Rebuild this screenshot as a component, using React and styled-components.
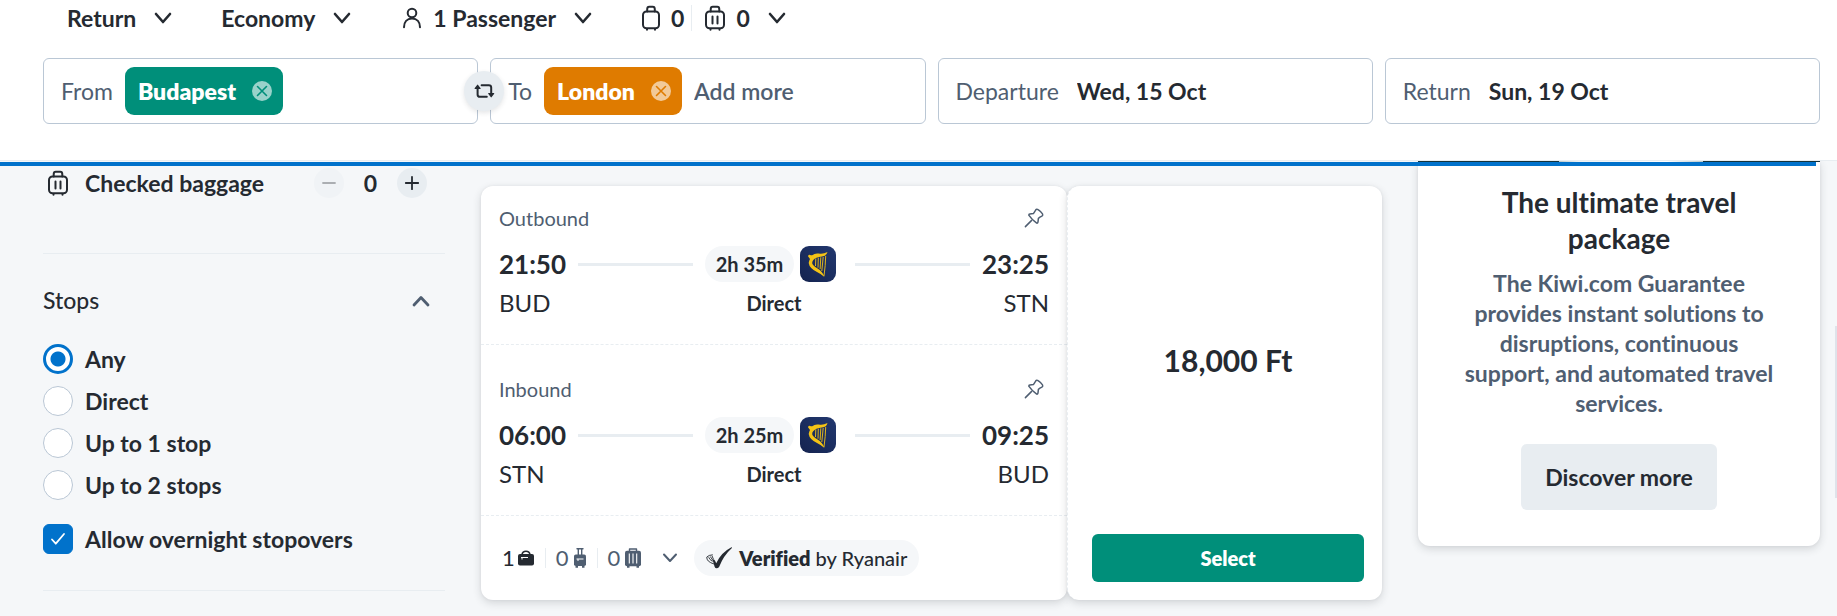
import React, { useState } from "react";
import styled, { createGlobalStyle, css } from "styled-components";

const color = {
  ink: "#252a31",
  slate: "#4f5e71",
  cloud: "#f5f7f9",
  line: "#e8edf1",
  border: "#bac7d5",
  blue: "#0172cb",
  green: "#008f7a",
  orange: "#df7b00",
};

const GlobalStyle = createGlobalStyle`
  *, *::before, *::after { box-sizing: border-box; }
  body { margin: 0; background: ${color.cloud}; font-variant-ligatures: none; }
  body, button, input {
    font-family: Lato, "Open Sans", "Liberation Sans", sans-serif;
    font-size: 23px;
    font-weight: 700;
    line-height: 30px;
    color: ${color.ink};
  }
  button { border: 0; padding: 0; background: none; cursor: pointer; }
  h2, h3, p { margin: 0; }
`;

/* Icons */

const Icon = styled.svg`
  display: block;
  flex: none;
  overflow: visible;
`;

const stroke = {
  fill: "none",
  stroke: "currentColor",
  strokeLinecap: "round",
  strokeLinejoin: "round",
};

const chevrons = {
  down: { d: "M5 8l7 8 7-8", width: 2.6 },
  up: { d: "M5 17l7-7.500 7 7.500", width: 2.8 },
  thin: { d: "M6 8.500l6 6.500 6-6.500", width: 2 },
};

const Chevron = ({ kind = "down" }) => (
  <Icon width="24" height="24" viewBox="0 0 24 24" aria-hidden="true">
    <path d={chevrons[kind].d} {...stroke} strokeWidth={chevrons[kind].width} />
  </Icon>
);

const PersonIcon = () => (
  <Icon width="24" height="24" viewBox="0 0 24 24" aria-hidden="true">
    <g {...stroke} strokeWidth="2">
      <circle cx="12" cy="7" r="4.3" />
      <path d="M4 21.300c0-5.300 3-8.800 8-8.800s8 3.500 8 8.800" />
    </g>
  </Icon>
);

const CabinBagIcon = () => (
  <Icon width="20" height="26" viewBox="0 0 20 26" aria-hidden="true">
    <g {...stroke} strokeWidth="2">
      <rect x="2" y="6.500" width="16" height="16.800" rx="3.500" />
      <path d="M6.200 6.500V4.200Q6.200 1.800 8.300 1.800h3.400q2.100 0 2.100 2.400v2.300M6 24.300v.4M14 24.300v.4" />
    </g>
  </Icon>
);

const CheckedBagIcon = () => (
  <Icon width="22" height="26" viewBox="0 0 22 26" aria-hidden="true">
    <g {...stroke} strokeWidth="2">
      <rect x="2" y="6.500" width="18" height="16.800" rx="3.500" />
      <path d="M6.700 6.500V4.200Q6.700 1.800 8.800 1.800h4.400q2.100 0 2.100 2.400v2.300M6.500 24.300v.4M15.500 24.300v.4M8.500 11.500v7M13.500 11.500v7" />
    </g>
  </Icon>
);

const SwapIcon = () => (
  <Icon width="20" height="14" viewBox="0 0 20 14" aria-hidden="true">
    <path d="M7.600 1.200h7.200Q17.200 1.200 17.200 3.600V9M12.800 12.800H6Q3.600 12.800 3.600 10.400V5" {...stroke} strokeWidth="2" />
    <path d="M3.100 .9q.5-.6 1 0l2.500 3.300q.4.800-.5.800h-5q-.9 0-.5-.8zM17.700 13.100q-.5.600-1 0l-2.500-3.300q-.4-.8.500-.8h5q.9 0 .5.8z" fill="currentColor" />
  </Icon>
);

const CrossIcon = () => (
  <Icon width="20" height="20" viewBox="0 0 20 20" aria-hidden="true">
    <circle cx="10" cy="10" r="10" fill="#fff" opacity=".6" />
    <path d="M5.500 5.500l9 9M14.500 5.500l-9 9" {...stroke} strokeWidth="1.600" />
  </Icon>
);

const SignIcon = ({ plus }) => (
  <Icon width="14" height="14" viewBox="0 0 14 14" aria-hidden="true">
    <path d={plus ? "M.8 7h12.400M7 .8v12.400" : "M1 7h12"} {...stroke} strokeWidth="1.800" />
  </Icon>
);

const PinIcon = () => (
  <Icon width="20" height="20" viewBox="0 0 20 20" aria-hidden="true">
    <g {...stroke} strokeWidth="1.500">
      <path d="M1.400 18.600l6-6" />
      <path d="M4.800 7.200q0-.9 1-1.100l3.600-.5q1.200-1.600 2.300-3.600 1-1.400 2.400-.3 2.600 1.800 4.400 4.200.8 1.200-.6 2.300-2.200 1.100-3.500 2.100l-.4 3.600q-.2 1.400-1.300 1.200Q8 12 4.800 7.200z" />
    </g>
  </Icon>
);

const HarpLogo = () => (
  <Icon width="36" height="36" viewBox="0 0 36 36" role="img" aria-label="Ryanair">
    <defs>
      <linearGradient id="navy" x1="0" y1="1" x2="1" y2="0">
        <stop offset="0" stopColor="#14234f" />
        <stop offset="1" stopColor="#22386f" />
      </linearGradient>
    </defs>
    <rect width="36" height="36" rx="9" fill="url(#navy)" />
    <path
      d="M8 10.300q.6-2 2.200-1.300 1 .4 2 .2Q15 6.800 19 7.600q4 .8 8.500-1.600-.8 4-5.500 4.600-3.300.2-5.500 1.200Q12 14 12.200 17.200q1 3 5.400 5.300 4.700 2.500 6.900 8.500-3.400-3-7.500-5-7.600-3.700-8.300-9 .4-2.600 1.300-4z"
      fill="#f4c315"
    />
    <path
      d="M15.800 12.500l-.3 7.500M18.300 11.700l-.3 10M20.800 11.300l-.7 11.700M23.200 11l-1.400 14M25.700 10q-.2 9-1.700 20"
      fill="none"
      stroke="#f4c315"
      strokeWidth=".9"
    />
  </Icon>
);

const VerifiedIcon = () => (
  <Icon width="26" height="22" viewBox="0 0 26 22" aria-hidden="true">
    <path d="M6.500 12.300q2-.3 2.700 1.700l1 2.200Q15 5.500 25 .4q1.700-.4.700.8-8.200 7.300-12.500 18.600-.7 1.600-2.600 1.400-1.400 0-2-1.500z" fill={color.ink} />
    <g fill="none" stroke={color.ink} strokeWidth=".900">
      <path d="M.8 10q2-2 6-2.200M.8 10q-.5 4.600 7.200 7M2.700 10.200q.6 2.300 3.800 4.200M4.300 9.500l2.700 4.200M6 8.800l1.400 3.300" />
    </g>
  </Icon>
);

const PersonalItemGlyph = () => (
  <Icon width="16" height="16" viewBox="0 0 16 16" aria-hidden="true">
    <path d="M4 4.500Q4.500 1.200 8 1.200t4 3.300" {...stroke} strokeWidth="1.600" />
    <rect y="4" width="16" height="11.500" rx="2" fill="currentColor" />
    <path d="M3 7.500h7M4 7.500v2" fill="none" stroke="#fff" strokeWidth="1" />
  </Icon>
);

const CabinGlyph = () => (
  <Icon width="12" height="20" viewBox="0 0 12 20" aria-hidden="true">
    <path d="M3 .8h6M4.300 1v6M7.700 1v6" {...stroke} strokeWidth="1.400" />
    <rect y="6.500" width="12" height="11.500" rx="1.800" fill="currentColor" />
    <path d="M1.500 18h2.500v1.700H1.500zM8 18h2.500v1.700H8z" fill="currentColor" />
    <path d="M2.500 11h7M4 11v2" fill="none" stroke="#fff" strokeWidth="1" />
  </Icon>
);

const CheckedGlyph = () => (
  <Icon width="16" height="20" viewBox="0 0 16 20" aria-hidden="true">
    <path d="M4.500 3V1h7v2" {...stroke} strokeWidth="1.400" />
    <rect y="2.800" width="16" height="15.400" rx="2" fill="currentColor" />
    <path d="M2 18h2.500v1.700H2zM11.500 18H14v1.700h-2.500z" fill="currentColor" />
    <path d="M4.300 5.500v10M8 5.500v10M11.700 5.500v10" stroke="#fff" strokeWidth="1.100" />
  </Icon>
);

/* Header */

const Page = styled.div`
  position: relative;
  min-height: 100vh;
  overflow: hidden;
`;

const Header = styled.header`
  position: relative;
  z-index: 1;
  background: #fff;
  border-bottom: 1px solid ${color.line};
  padding: 3px 17px 36px 43px;
`;

const LoadingBar = styled.div`
  position: absolute;
  left: 0;
  right: 21px;
  bottom: -6px;
  height: 4px;
  background: ${color.blue};
`;

const Options = styled.div`
  display: flex;
  align-items: center;
  gap: 46px;
  padding-left: 24px;
  margin-bottom: 25px;
`;

const OptionButton = styled.button`
  display: flex;
  align-items: center;
  gap: 15px;
`;

const OptionText = styled.span`
  display: flex;
  align-items: center;
  gap: 9px;
`;

const BagCount = styled.span`
  display: flex;
  align-items: center;
  gap: 10px;
  & + & {
    border-left: 1px solid ${color.line};
    padding-left: 12px;
    margin-left: -8px;
    line-height: 20px;
  }
`;

const SearchForm = styled.form`
  display: grid;
  grid-template-columns: repeat(4, 1fr);
  gap: 12px;
`;

const Field = styled.div`
  position: relative;
  display: flex;
  align-items: center;
  gap: ${(p) => (p.$wide ? 18 : 12)}px;
  height: 66px;
  padding: 0 17px;
  border: 1px solid ${color.border};
  border-radius: 6px;
  background: #fff;
`;

const FieldLabel = styled.label`
  color: ${color.slate};
  font-weight: 400;
`;

const FieldInput = styled.input`
  flex: 1;
  min-width: 0;
  width: 0;
  padding: 0;
  border: 0;
  outline: 0;
  background: none;
  &::placeholder {
    color: ${color.slate};
    opacity: 1;
    font-weight: 600;
  }
`;

const PlaceTag = styled.span`
  display: flex;
  align-items: center;
  gap: 16px;
  height: 48px;
  padding: 0 11px 0 13px;
  border-radius: 9px;
  background: ${(p) => p.$tone};
  color: #fff;
  font-weight: 800;
  button { color: ${(p) => p.$tone}; }
`;

const SwapButton = styled.button`
  position: absolute;
  z-index: 1;
  right: -27px;
  top: 12px;
  display: grid;
  place-items: center;
  width: 40px;
  height: 40px;
  border-radius: 50%;
  background: ${color.line};
  box-shadow: 0 2px 5px rgba(37, 42, 49, 0.12);
`;

/* Page columns */

const Columns = styled.main`
  display: grid;
  grid-template-columns: 402px minmax(0, 1fr) 402px;
  align-items: start;
  gap: 36px;
  padding: 0 17px 0 43px;
`;

const FilterGroup = styled.section`
  border-bottom: 1px solid ${color.line};
  padding: ${(p) => p.$padding};
`;

const BaggageRow = styled.div`
  display: flex;
  align-items: center;
  gap: 20px;
  padding: 0 18px 0 4px;
`;

const FilterName = styled.span`
  flex: 1;
  display: flex;
  align-items: center;
  gap: 16px;
`;

const RoundButton = styled.button`
  display: grid;
  place-items: center;
  width: 30px;
  height: 30px;
  border-radius: 50%;
  background: ${color.line};
  &:disabled {
    opacity: 0.35;
    color: ${color.ink};
  }
`;

const GroupToggle = styled.button`
  display: flex;
  justify-content: space-between;
  align-items: center;
  width: 100%;
  padding-right: 12px;
  margin-bottom: 29px;
  font-weight: 500;
  svg { color: ${color.slate}; }
`;

const ChoiceList = styled.div`
  display: flex;
  flex-direction: column;
  gap: 12px;
  margin-bottom: 24px;
`;

const Choice = styled.label`
  display: flex;
  align-items: center;
  gap: 12px;
`;

const choiceBox = css`
  appearance: none;
  flex: none;
  width: 30px;
  height: 30px;
  margin: 0;
  background: #fff;
`;

const Radio = styled.input`
  ${choiceBox}
  border: 1px solid ${color.border};
  border-radius: 50%;
  &:checked {
    border: 3px solid ${color.blue};
    background: radial-gradient(circle, ${color.blue} 7px, #fff 8px);
  }
`;

const CheckWrap = styled.span`
  display: grid;
  > * { grid-area: 1 / 1; place-self: center; }
  svg { color: #fff; pointer-events: none; }
`;

const Checkbox = styled.input`
  ${choiceBox}
  border: 1px solid ${color.border};
  border-radius: 6px;
  &:checked {
    border-color: ${color.blue};
    background: ${color.blue};
  }
`;

/* Result card */

const raised = css`
  background: #fff;
  box-shadow: 0 3px 9px rgba(37, 42, 49, 0.16), 0 0 3px rgba(37, 42, 49, 0.06);
`;

const Result = styled.article`
  display: grid;
  grid-template-columns: 586fr 315fr;
  margin-top: 25px;
`;

const Trip = styled.div`
  ${raised}
  border-radius: 12px;
`;

const Leg = styled.section`
  padding: 17px 18px 26px;
  border-bottom: 1px dashed ${color.line};
  & + & { padding-top: 29px; }
`;

const LegHead = styled.div`
  display: flex;
  justify-content: space-between;
  align-items: center;
  padding-right: 5px;
  margin-bottom: 13px;
`;

const LegTitle = styled.h3`
  font-size: 20px;
  font-weight: 400;
  color: ${color.slate};
`;

const PinButton = styled.button`
  color: ${color.slate};
`;

const Timeline = styled.div`
  display: flex;
  align-items: center;
  gap: 12px;
  margin-bottom: 6px;
`;

const Time = styled.time`
  font-size: 26px;
`;

const Track = styled.span`
  flex: 1;
  height: 3px;
  background: ${color.line};
`;

const Carrier = styled.span`
  display: flex;
  gap: 6px;
  padding-right: 7px;
`;

const Pill = styled.span`
  display: flex;
  align-items: center;
  gap: 7px;
  height: 36px;
  padding: 0 ${(p) => (p.$light ? 12 : 11)}px;
  border-radius: 18px;
  background: ${color.cloud};
  font-size: 20px;
  font-weight: ${(p) => (p.$light ? 500 : 700)};
  white-space: pre;
  strong { font-weight: 800; }
`;

const Stations = styled.div`
  display: grid;
  grid-template-columns: 1fr auto 1fr;
  font-size: 24px;
  font-weight: 400;
`;

const StopInfo = styled.span`
  font-size: 20px;
  font-weight: 700;
`;

const ArrivalCode = styled.span`
  text-align: right;
`;

const TripFooter = styled.div`
  display: flex;
  align-items: center;
  padding: 24px 18px;
`;

const Allowance = styled.button`
  display: flex;
  align-items: center;
  padding: 0 12px 0 3px;
  font-size: 22px;
  font-weight: 400;
  line-height: 18px;
  color: ${color.slate};
  > svg { margin-left: 6px; }
`;

const AllowanceItem = styled.span`
  display: flex;
  align-items: center;
  gap: 5px;
  padding-right: 11px;
  ${(p) => p.$included && css`gap: 3px; color: ${color.ink};`}
  & + & {
    border-left: 1px solid ${color.line};
    padding-left: 10px;
  }
`;

const PricePanel = styled.div`
  ${raised}
  display: flex;
  flex-direction: column;
  border-left: 1px dashed ${color.line};
  border-radius: 12px;
  padding: 0 18px 18px 24px;
`;

const Price = styled.p`
  flex: 1;
  display: grid;
  place-items: center;
  font-size: 30px;
`;

const SelectButton = styled.button`
  height: 48px;
  border-radius: 6px;
  background: ${color.green};
  color: #fff;
  font-size: 20px;
  font-weight: 800;
`;

/* Promotion */

const Promo = styled.aside`
  ${raised}
  border-radius: 0 0 12px 12px;
  padding-bottom: 36px;
  text-align: center;
`;

const PromoPhoto = styled.div`
  height: 1px;
  margin-bottom: 22px;
  background: linear-gradient(90deg, #15343c 35%, #b9c7c9 35%, #eef2f3 40%, #fff 62%, #b9c7c9 71%, #15343c 71%);
`;

const PromoTitle = styled.h2`
  padding: 0 64px;
  font-size: 28px;
  line-height: 36px;
  margin-bottom: 12px;
`;

const PromoText = styled.p`
  padding: 0 40px;
  margin-bottom: 26px;
  color: ${color.slate};
`;

const PromoButton = styled.button`
  height: 66px;
  padding: 0 24px;
  border-radius: 6px;
  background: ${color.line};
`;

const ScrollThumb = styled.div`
  position: absolute;
  right: 0;
  top: 326px;
  width: 2px;
  height: 172px;
  background: #dfe3ea;
`;

const legs = [
  { title: "Outbound", from: "BUD", to: "STN", departs: "21:50", arrives: "23:25", duration: "2h 35m" },
  { title: "Inbound", from: "STN", to: "BUD", departs: "06:00", arrives: "09:25", duration: "2h 25m" },
];

const stops = ["Any", "Direct", "Up to 1 stop", "Up to 2 stops"];

function SearchHeader() {
  return (
    <Header>
      <Options>
        <OptionButton type="button">Return<Chevron /></OptionButton>
        <OptionButton type="button">Economy<Chevron /></OptionButton>
        <OptionButton type="button">
          <OptionText><PersonIcon />1 Passenger</OptionText>
          <Chevron />
        </OptionButton>
        <OptionButton type="button" aria-label="Baggage">
          <BagCount><CabinBagIcon />0</BagCount>
          <BagCount><CheckedBagIcon />0</BagCount>
          <Chevron />
        </OptionButton>
      </Options>
      <SearchForm onSubmit={(e) => e.preventDefault()}>
        <Field>
          <FieldLabel htmlFor="from">From</FieldLabel>
          <PlaceTag $tone={color.green}>
            Budapest
            <button type="button" aria-label="Remove Budapest"><CrossIcon /></button>
          </PlaceTag>
          <FieldInput id="from" />
          <SwapButton type="button" aria-label="Swap places"><SwapIcon /></SwapButton>
        </Field>
        <Field>
          <FieldLabel htmlFor="to">To</FieldLabel>
          <PlaceTag $tone={color.orange}>
            London
            <button type="button" aria-label="Remove London"><CrossIcon /></button>
          </PlaceTag>
          <FieldInput id="to" placeholder="Add more" />
        </Field>
        <Field $wide>
          <FieldLabel htmlFor="departure">Departure</FieldLabel>
          <FieldInput id="departure" defaultValue="Wed, 15 Oct" />
        </Field>
        <Field $wide>
          <FieldLabel htmlFor="return">Return</FieldLabel>
          <FieldInput id="return" defaultValue="Sun, 19 Oct" />
        </Field>
      </SearchForm>
      <LoadingBar />
    </Header>
  );
}

function Filters() {
  const [stop, setStop] = useState("Any");
  const [bags, setBags] = useState(0);
  return (
    <div>
      <FilterGroup $padding="7px 0 55px">
        <BaggageRow>
          <FilterName><CheckedBagIcon />Checked baggage</FilterName>
          <RoundButton aria-label="Fewer bags" disabled={bags === 0} onClick={() => setBags(bags - 1)}>
            <SignIcon />
          </RoundButton>
          <span>{bags}</span>
          <RoundButton aria-label="More bags" onClick={() => setBags(bags + 1)}>
            <SignIcon plus />
          </RoundButton>
        </BaggageRow>
      </FilterGroup>
      <FilterGroup $padding="31px 0 36px">
        <GroupToggle type="button">Stops<Chevron kind="up" /></GroupToggle>
        <ChoiceList>
          {stops.map((name) => (
            <Choice key={name}>
              <Radio type="radio" name="stops" checked={stop === name} onChange={() => setStop(name)} />
              {name}
            </Choice>
          ))}
        </ChoiceList>
        <Choice>
          <CheckWrap>
            <Checkbox type="checkbox" defaultChecked />
            <Icon width="16" height="14" viewBox="0 0 16 14" aria-hidden="true">
              <path d="M2 7.500l3.800 4.200L14 2" {...stroke} strokeWidth="1.800" />
            </Icon>
          </CheckWrap>
          Allow overnight stopovers
        </Choice>
      </FilterGroup>
    </div>
  );
}

function TripLeg({ leg }) {
  return (
    <Leg>
      <LegHead>
        <LegTitle>{leg.title}</LegTitle>
        <PinButton type="button" aria-label={`Pin ${leg.title}`}><PinIcon /></PinButton>
      </LegHead>
      <Timeline>
        <Time>{leg.departs}</Time>
        <Track />
        <Carrier>
          <Pill>{leg.duration}</Pill>
          <HarpLogo />
        </Carrier>
        <Track />
        <Time>{leg.arrives}</Time>
      </Timeline>
      <Stations>
        <span>{leg.from}</span>
        <StopInfo>Direct</StopInfo>
        <ArrivalCode>{leg.to}</ArrivalCode>
      </Stations>
    </Leg>
  );
}

export default function App() {
  return (
    <Page>
      <GlobalStyle />
      <SearchHeader />
      <Columns>
        <Filters />
        <Result>
          <Trip>
            {legs.map((leg) => <TripLeg key={leg.title} leg={leg} />)}
            <TripFooter>
              <Allowance type="button">
                <AllowanceItem $included>1<PersonalItemGlyph /></AllowanceItem>
                <AllowanceItem>0<CabinGlyph /></AllowanceItem>
                <AllowanceItem>0<CheckedGlyph /></AllowanceItem>
                <Chevron kind="thin" />
              </Allowance>
              <Pill $light>
                <VerifiedIcon />
                <span><strong>Verified</strong> by Ryanair</span>
              </Pill>
            </TripFooter>
          </Trip>
          <PricePanel>
            <Price>18,000 Ft</Price>
            <SelectButton type="button">Select</SelectButton>
          </PricePanel>
        </Result>
        <Promo>
          <PromoPhoto />
          <PromoTitle>The ultimate travel package</PromoTitle>
          <PromoText>
            The Kiwi.com Guarantee provides instant solutions to disruptions, continuous support, and automated travel services.
          </PromoText>
          <PromoButton type="button">Discover more</PromoButton>
        </Promo>
      </Columns>
      <ScrollThumb />
    </Page>
  );
}
